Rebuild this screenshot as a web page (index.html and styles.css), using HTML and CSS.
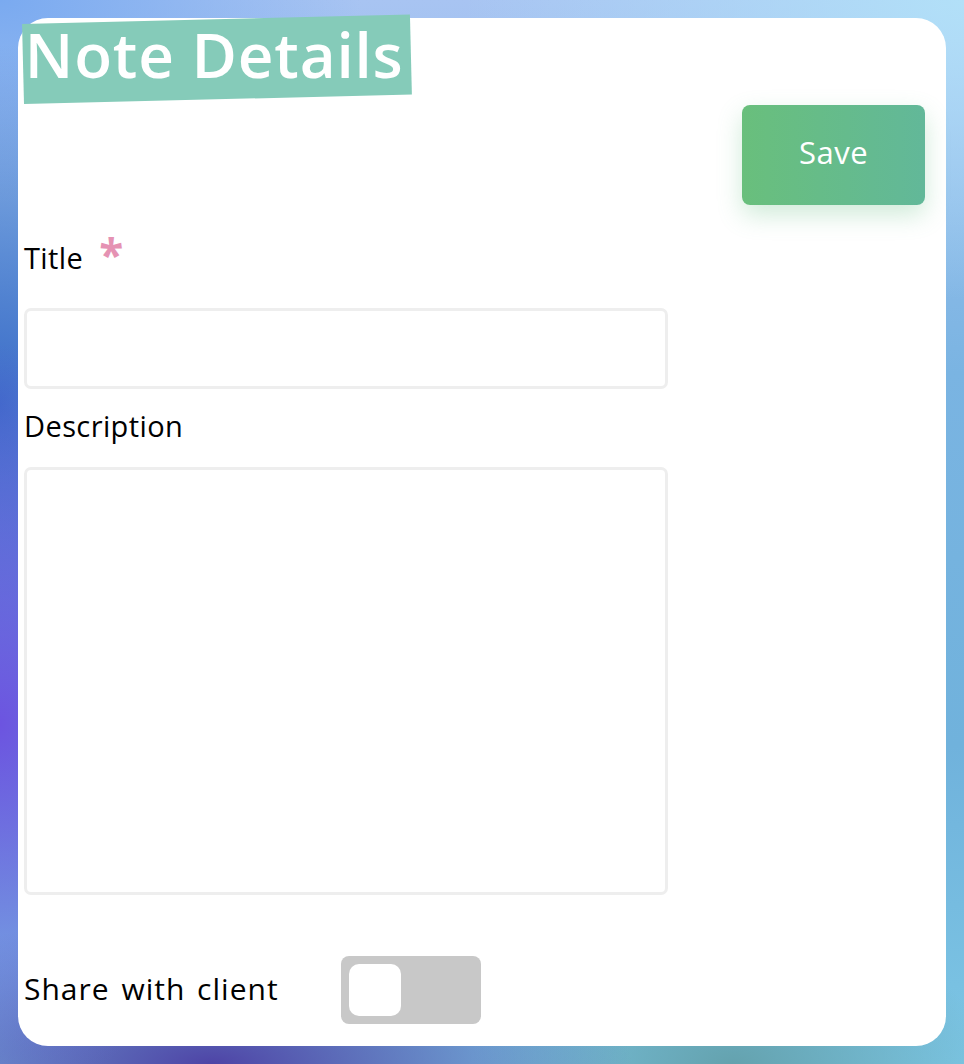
FILE: index.html
```html
<!DOCTYPE html>
<html>
<head>
<meta charset="utf-8">
<link rel="stylesheet" href="styles.css">
</head>
<body>
<div class="page">
  <div class="card">
    <div class="banner"><h1 class="banner-text">Note Details</h1></div>
    <div class="actions"><button class="save">Save</button></div>
    <div class="field">
      <label class="label">Title <span class="req">*</span></label>
      <div class="input"></div>
    </div>
    <div class="field">
      <label class="label label-desc">Description</label>
      <div class="textarea"></div>
    </div>
    <div class="share">
      <span class="share-label">Share with client</span>
      <div class="toggle"><div class="knob"></div></div>
    </div>
  </div>
</div>
</body>
</html>
```

FILE: styles.css
```css
html, body {
  margin: 0;
  padding: 0;
  width: 964px;
  height: 1064px;
  overflow: hidden;
}
body {
  font-family: "Open Sans", "Liberation Sans", sans-serif;
  background:
    radial-gradient(ellipse 240px 380px at 0% 68%, #6c54e0 0%, rgba(108,84,224,0) 100%),
    radial-gradient(ellipse 420px 150px at 22% 100%, #4e44a6 0%, rgba(78,68,166,0) 100%),
    radial-gradient(ellipse 260px 140px at 76% 100%, #64a2ae 0%, rgba(100,162,174,0) 100%),
    radial-gradient(ellipse 200px 360px at 0% 38%, #3c6cc8 0%, rgba(60,108,200,0) 100%),
    radial-gradient(ellipse 360px 200px at 0% 0%, #7aaaf0 0%, rgba(122,170,240,0) 100%),
    radial-gradient(ellipse 500px 300px at 100% 0%, #b2e0f8 0%, rgba(178,224,248,0) 100%),
    linear-gradient(180deg, #a8c4f2 0%, #7ab4e2 35%, #70b2dc 70%, #7cc6e4 100%);
}
.page {
  padding: 18px;
  box-sizing: border-box;
  height: 1064px;
}
.card {
  background: #fff;
  width: 928px;
  height: 1028px;
  border-radius: 30px;
  box-sizing: border-box;
  padding: 1px 21px 0 6px;
  display: flex;
  flex-direction: column;
}
.banner {
  align-self: flex-start;
  background: #85cbb9;
  width: 388px;
  height: 80px;
  margin-top: 5px;
  transform: rotate(-1.4deg);
  transform-origin: left bottom;
  display: flex;
  align-items: center;
}
.banner-text {
  margin: 0;
  color: #fff;
  font-family: "Open Sans", sans-serif;
  font-weight: 600;
  font-size: 62px;
  line-height: 1;
  padding-left: 2px;
  margin-top: -10px;
  transform: rotate(1.4deg);
  letter-spacing: 0.8px;
  white-space: nowrap;
}
.actions {
  display: flex;
  justify-content: flex-end;
  margin-top: 1px;
}
.save {
  width: 183px;
  height: 100px;
  border: none;
  border-radius: 8px;
  background: linear-gradient(90deg, #69bf7c 0%, #62b899 100%);
  color: #fff;
  font-family: "Open Sans", sans-serif;
  font-size: 31px;
  letter-spacing: 0.5px;
  padding: 0 0 6px;
  box-shadow: 0 10px 24px rgba(100, 190, 130, 0.3);
}
.field {
  display: flex;
  flex-direction: column;
  width: 644px;
}
.label {
  font-size: 29px;
  letter-spacing: 0.4px;
  color: #000;
  line-height: 36px;
  margin-top: 35px;
  margin-bottom: 32px;
}
.label-desc {
  margin-top: 19px;
  margin-bottom: 23px;
}
.req {
  color: #e592b3;
  font-size: 44px;
  position: relative;
  top: 2px;
  line-height: 0;
  margin-left: 8px;
  font-weight: 700;
}
.input {
  height: 81px;
  border: 3px solid #eeeeee;
  border-radius: 7px;
  box-sizing: border-box;
}
.textarea {
  height: 428px;
  border: 3px solid #eeeeee;
  border-radius: 7px;
  box-sizing: border-box;
}
.share {
  display: flex;
  align-items: center;
  margin-top: 61px;
}
.share-label {
  font-size: 30px;
  letter-spacing: 1px;
  word-spacing: 3px;
  width: 317px;
  padding-bottom: 4px;
}
.toggle {
  width: 140px;
  height: 68px;
  background: #c8c8c8;
  border-radius: 8px;
  box-sizing: border-box;
  padding: 8px;
}
.knob {
  width: 52px;
  height: 52px;
  background: #fff;
  border-radius: 10px;
}
```
